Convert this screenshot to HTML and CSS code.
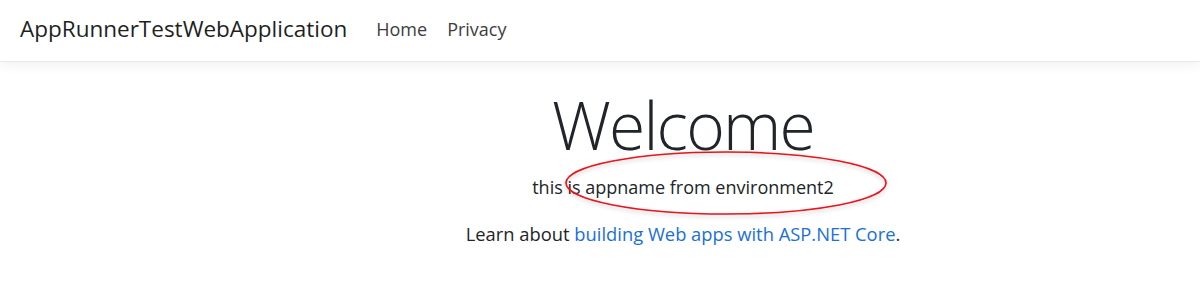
FILE: index.html
```html
<!DOCTYPE html>
<html lang="en">
<head>
<meta charset="utf-8">
<title>Home Page - AppRunnerTestWebApplication</title>
<link rel="stylesheet" href="styles.css">
</head>
<body>
<header class="navbar">
  <a class="brand" href="#">AppRunnerTestWebApplication</a>
  <nav class="nav">
    <a class="nav-link" href="#">Home</a>
    <a class="nav-link" href="#">Privacy</a>
  </nav>
</header>
<main class="page">
  <div class="hero">
    <h1 class="display">Welcome</h1>
    <p class="appname"><span class="annot">this is appname from environment2<svg class="ellipse" width="330" height="72" viewBox="0 0 330 72" aria-hidden="true"><defs><filter id="sh" x="-10%" y="-30%" width="120%" height="160%"><feDropShadow dx="0" dy="2" stdDeviation="2" flood-color="#000" flood-opacity="0.22"/></filter></defs><ellipse cx="164" cy="34" rx="160" ry="31" fill="none" stroke="#e8141c" stroke-width="1.6" filter="url(#sh)"/></svg></span></p>
    <p class="learn">Learn about <a href="#">building Web apps with ASP.NET Core</a>.</p>
  </div>
</main>
</body>
</html>
```
FILE: styles.css
```css
html, body {
  margin: 0;
  padding: 0;
  background: #fff;
  overflow: hidden;
}
body {
  font-family: "Open Sans", "Noto Sans", sans-serif;
  color: #212529;
  width: 1200px;
  height: 307px;
}
.navbar {
  display: flex;
  align-items: center;
  height: 62px;
  box-sizing: border-box;
  padding: 0 20px 4px;
  border-bottom: 1px solid #e9e9e9;
  box-shadow: 0 4px 12px rgba(0, 0, 0, 0.05);
  background: #fff;
  position: relative;
}
.brand {
  font-size: 22.5px;
  color: #1f1f1f;
  text-decoration: none;
  margin-right: 29px;
}
.nav {
  display: flex;
  gap: 20px;
}
.nav-link {
  font-size: 18px;
  color: #3d3d3d;
  text-decoration: none;
}
.page {
  padding-left: 166px;
}
.hero {
  text-align: center;
  padding-top: 23px;
}
.display {
  margin: 0;
  font-weight: 300;
  font-size: 66px;
  letter-spacing: -1.8px;
  line-height: 1.2;
  color: #212529;
}
.appname {
  margin: 10px 0 0;
  font-size: 18px;
  line-height: 1.5;
}
.annot {
  position: relative;
}
.ellipse {
  position: absolute;
  left: 30px;
  top: -26px;
}
.learn {
  margin: 19px 0 0;
  font-size: 18.35px;
  line-height: 1.5;
}
.learn a {
  color: #1a6fd9;
  text-decoration: none;
}
```
